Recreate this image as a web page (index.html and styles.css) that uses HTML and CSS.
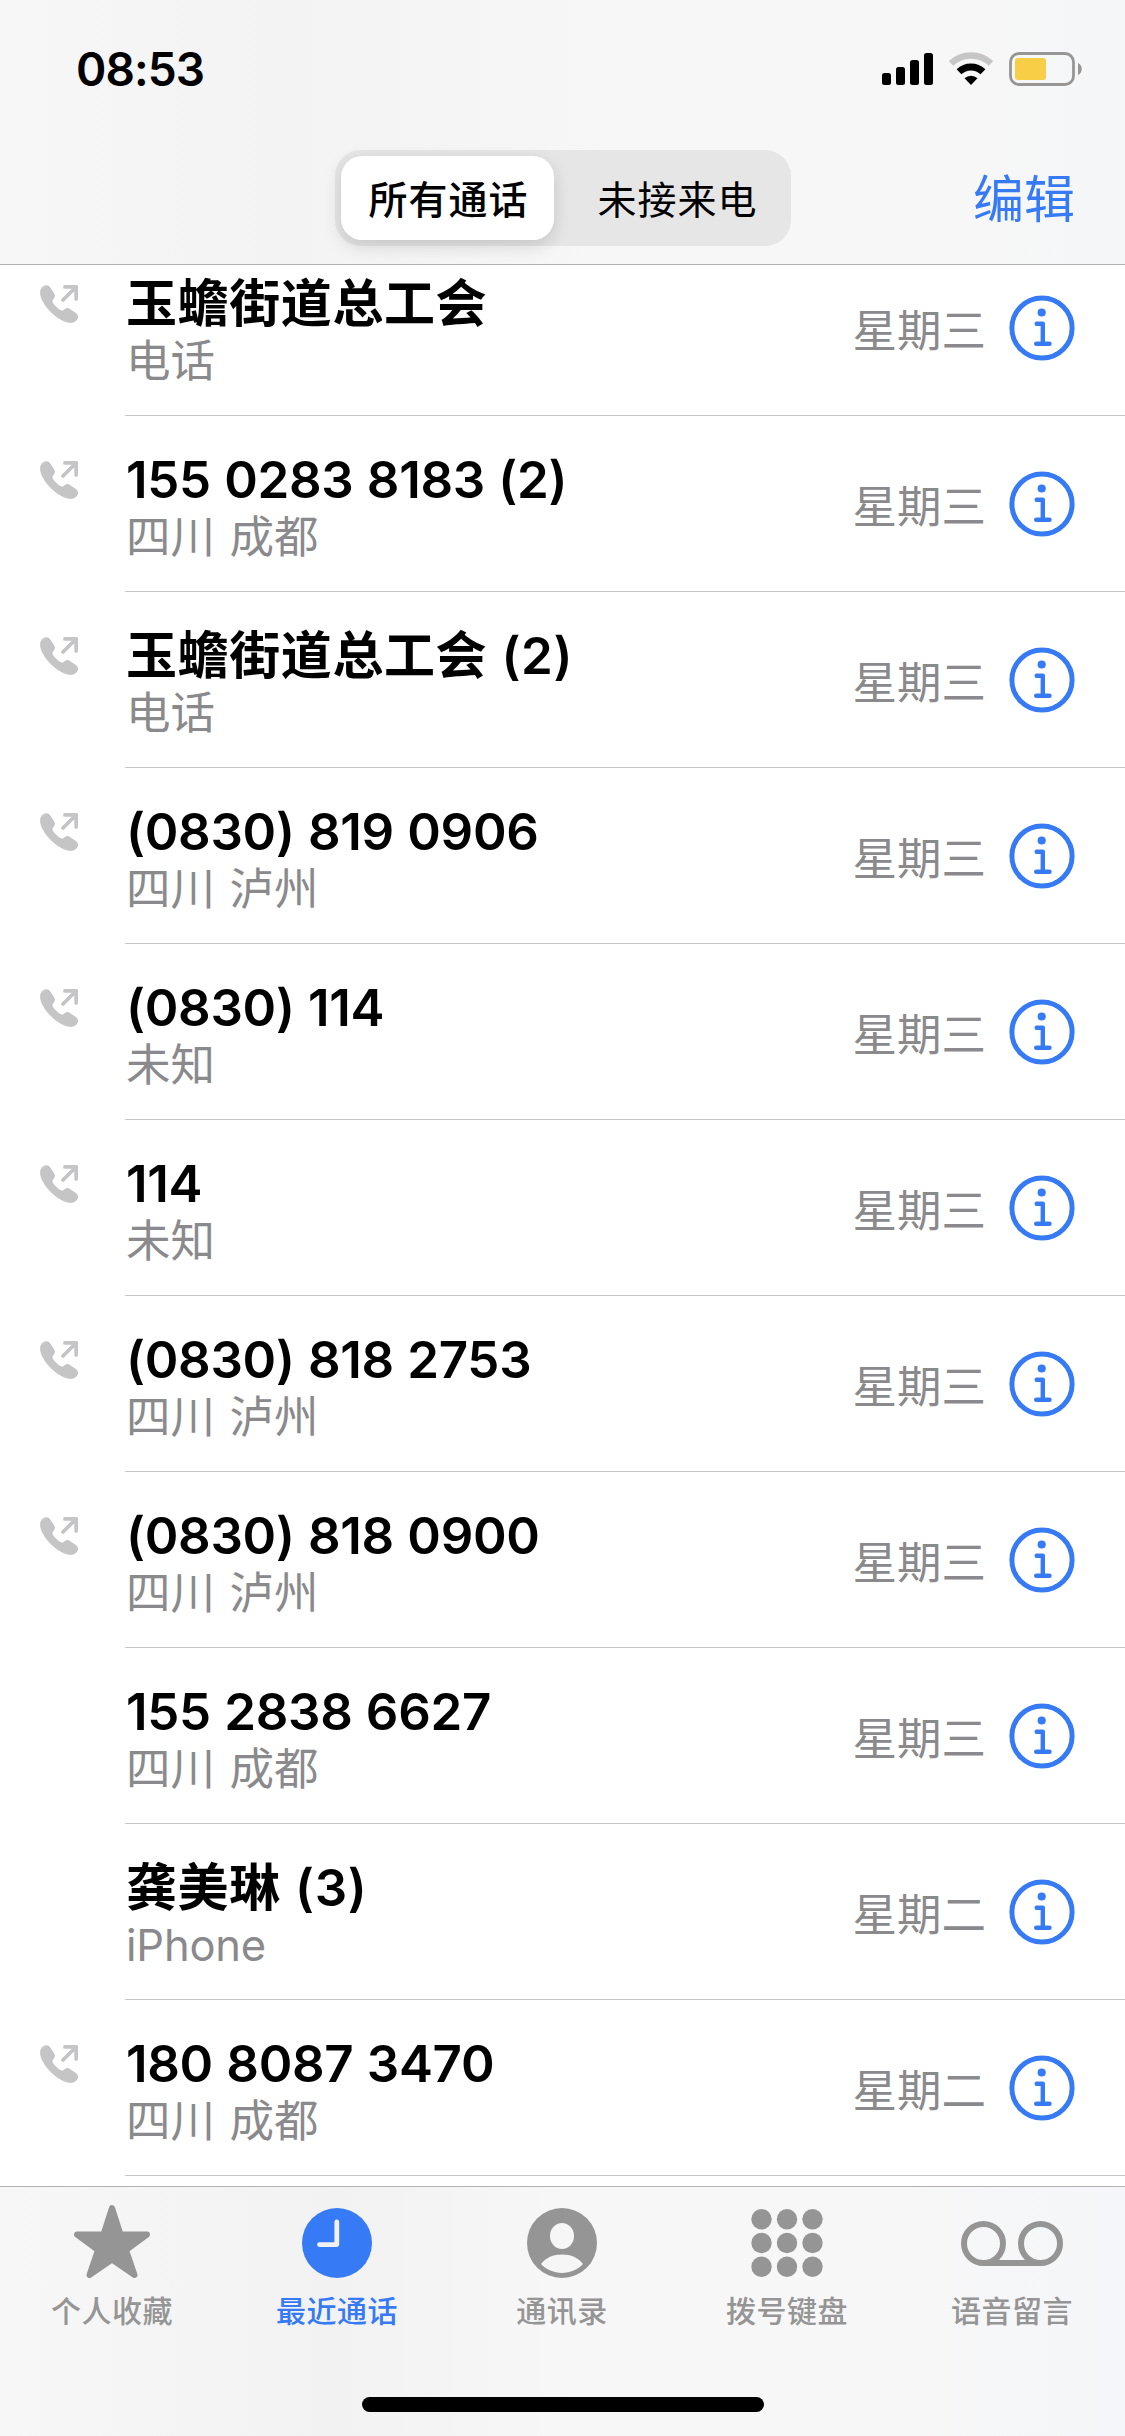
FILE: index.html
```html
<!DOCTYPE html>
<html lang="zh-CN">

<head>
	<meta charset="UTF-8">
	<title>最近通话</title>
	<link rel="stylesheet" href="styles.css">
</head>

<body>
	<!-- shared icons -->
	<svg class="sprite">
		<symbol id="outgoing" viewBox="0 0 38 38">
			<path d="M5.500 .3C7.500-.2 9.300.5 10.500 2.700L14.200 8.400C15.300 10.300 15 12 13.800 13.500L12.800 15C12.200 16 12.400 17.100 13.400 18.400C15.300 20.900 18.200 23.600 20.600 25.200C21.800 25.900 22.700 25.900 23.600 25L25.200 23.700C26.800 22.700 28.400 22.900 30 24L35.800 27.900C38.300 29.700 38.600 32 37.200 34.400C35.200 37.400 31.500 38.500 27.700 37.600C21.200 35.900 13 30.200 7.300 23.200C2.700 17.500 0 11.800 .1 7.200C.2 3.600 2.500 1.100 5.500 .3Z" fill="currentColor"/>
			<path d="M25 1.900H36.200V14M35.500 2.500L23 15" fill="none" stroke="currentColor" stroke-width="3.800" stroke-linecap="round" stroke-linejoin="round"/>
		</symbol>
		<symbol id="info" viewBox="0 0 66 66">
			<circle cx="33" cy="33" r="30.100" fill="none" stroke="currentColor" stroke-width="5"/>
			<circle cx="32.700" cy="17.500" r="4.100" fill="currentColor"/>
			<path d="M27.700 28.800H33.800V48.500M27.200 48.700H40.500" fill="none" stroke="currentColor" stroke-width="4.400" stroke-linecap="round" stroke-linejoin="round"/>
		</symbol>
	</svg>

	<header class="top">
		<div class="status">
			<span class="time">08:53</span>
			<svg class="status-icons" width="204" height="36" viewBox="0 0 204 36">
				<rect x="0" y="22" width="9" height="12" rx="2.500"/>
				<rect x="14" y="16" width="9" height="18" rx="2.500"/>
				<rect x="28" y="9" width="9" height="25" rx="2.500"/>
				<rect x="42" y="2" width="9" height="32" rx="2.500"/>
				<path d="M69 12.400A29 29 0 0 1 109 12.400" fill="none" stroke="#c6c6c6" stroke-width="6.500"/>
				<path d="M77 20.700A17.500 17.500 0 0 1 101 20.700" fill="none" stroke="#000" stroke-width="7"/>
				<path d="M82.500 27.200A9.500 9.500 0 0 1 95.500 27.200L89 34Z"/>
				<rect x="128.500" y="2.500" width="63" height="31" rx="8.500" fill="none" stroke="#969696" stroke-width="2.800"/>
				<rect x="133" y="7" width="31" height="22" rx="3" fill="#f7ce46"/>
				<path d="M196 12C201 14 201 22 196 24Z" fill="#969696"/>
			</svg>
		</div>
		<nav class="navbar">
			<div class="segmented">
				<div class="segment selected">所有通话</div>
				<div class="segment">未接来电</div>
			</div>
			<a class="edit">编辑</a>
		</nav>
	</header>

	<main class="calls">
		<div class="call">
			<svg class="call-icon"><use href="#outgoing"/></svg>
			<div class="call-body">
				<div class="who"><div class="name contact">玉蟾街道总工会</div><div class="place">电话</div></div>
				<span class="day">星期三</span>
				<svg class="info"><use href="#info"/></svg>
			</div>
		</div>
		<div class="call">
			<svg class="call-icon"><use href="#outgoing"/></svg>
			<div class="call-body">
				<div class="who"><div class="name">155 0283 8183 (2)</div><div class="place">四川 成都</div></div>
				<span class="day">星期三</span>
				<svg class="info"><use href="#info"/></svg>
			</div>
		</div>
		<div class="call">
			<svg class="call-icon"><use href="#outgoing"/></svg>
			<div class="call-body">
				<div class="who"><div class="name contact">玉蟾街道总工会 (2)</div><div class="place">电话</div></div>
				<span class="day">星期三</span>
				<svg class="info"><use href="#info"/></svg>
			</div>
		</div>
		<div class="call">
			<svg class="call-icon"><use href="#outgoing"/></svg>
			<div class="call-body">
				<div class="who"><div class="name">(0830) 819 0906</div><div class="place">四川 泸州</div></div>
				<span class="day">星期三</span>
				<svg class="info"><use href="#info"/></svg>
			</div>
		</div>
		<div class="call">
			<svg class="call-icon"><use href="#outgoing"/></svg>
			<div class="call-body">
				<div class="who"><div class="name">(0830) 114</div><div class="place">未知</div></div>
				<span class="day">星期三</span>
				<svg class="info"><use href="#info"/></svg>
			</div>
		</div>
		<div class="call">
			<svg class="call-icon"><use href="#outgoing"/></svg>
			<div class="call-body">
				<div class="who"><div class="name">114</div><div class="place">未知</div></div>
				<span class="day">星期三</span>
				<svg class="info"><use href="#info"/></svg>
			</div>
		</div>
		<div class="call">
			<svg class="call-icon"><use href="#outgoing"/></svg>
			<div class="call-body">
				<div class="who"><div class="name">(0830) 818 2753</div><div class="place">四川 泸州</div></div>
				<span class="day">星期三</span>
				<svg class="info"><use href="#info"/></svg>
			</div>
		</div>
		<div class="call">
			<svg class="call-icon"><use href="#outgoing"/></svg>
			<div class="call-body">
				<div class="who"><div class="name">(0830) 818 0900</div><div class="place">四川 泸州</div></div>
				<span class="day">星期三</span>
				<svg class="info"><use href="#info"/></svg>
			</div>
		</div>
		<!-- incoming calls have no icon -->
		<div class="call">
			<div class="call-body">
				<div class="who"><div class="name">155 2838 6627</div><div class="place">四川 成都</div></div>
				<span class="day">星期三</span>
				<svg class="info"><use href="#info"/></svg>
			</div>
		</div>
		<div class="call">
			<div class="call-body">
				<div class="who"><div class="name contact">龚美琳 (3)</div><div class="place latin">iPhone</div></div>
				<span class="day">星期二</span>
				<svg class="info"><use href="#info"/></svg>
			</div>
		</div>
		<div class="call">
			<svg class="call-icon"><use href="#outgoing"/></svg>
			<div class="call-body">
				<div class="who"><div class="name">180 8087 3470</div><div class="place">四川 成都</div></div>
				<span class="day">星期二</span>
				<svg class="info"><use href="#info"/></svg>
			</div>
		</div>
	</main>

	<footer class="bottom">
		<nav class="tabs">
			<a class="tab">
				<svg width="76" height="80" viewBox="0 0 76 80">
					<path d="M38 8L46.500 34.500H73L52 50L60.500 75L38 59.500L15.500 75L24 50L3 34.500H29.500Z" fill="currentColor" stroke="currentColor" stroke-width="6" stroke-linejoin="round"/>
				</svg>
				<span>个人收藏</span>
			</a>
			<a class="tab active">
				<svg width="76" height="80" viewBox="0 0 76 80">
					<circle cx="38" cy="43" r="35" fill="currentColor"/>
					<path d="M37.800 22V44.600H20.500" fill="none" stroke="#f2f2f2" stroke-width="4.800" stroke-linecap="round" stroke-linejoin="round"/>
				</svg>
				<span>最近通话</span>
			</a>
			<a class="tab">
				<svg width="76" height="80" viewBox="0 0 76 80">
					<circle cx="38" cy="43" r="35" fill="currentColor"/>
					<ellipse cx="38" cy="36" rx="12" ry="13" fill="#f6f6f6"/>
					<path d="M17 64C22 57.500 29 54.500 38 54.500S54 57.500 59 64C54 69.500 46 73 38 73S22 69.500 17 64Z" fill="#f6f6f6"/>
				</svg>
				<span>通讯录</span>
			</a>
			<a class="tab">
				<svg width="76" height="80" viewBox="0 0 76 80" fill="currentColor">
					<circle cx="12.500" cy="19.300" r="10.200"/><circle cx="38" cy="19.300" r="10.200"/><circle cx="63.500" cy="19.300" r="10.200"/>
					<circle cx="12.500" cy="43" r="10.200"/><circle cx="38" cy="43" r="10.200"/><circle cx="63.500" cy="43" r="10.200"/>
					<circle cx="12.500" cy="66.700" r="10.200"/><circle cx="38" cy="66.700" r="10.200"/><circle cx="63.500" cy="66.700" r="10.200"/>
				</svg>
				<span>拨号键盘</span>
			</a>
			<a class="tab">
				<svg width="104" height="80" viewBox="0 0 104 80" fill="none" stroke="currentColor" stroke-width="6">
					<circle cx="23.500" cy="43.500" r="19.500"/>
					<circle cx="80.500" cy="43.500" r="19.500"/>
					<path d="M23.500 63H80.500"/>
				</svg>
				<span>语音留言</span>
			</a>
		</nav>
		<div class="home"></div>
	</footer>
</body>

</html>
```
FILE: styles.css
```css
* {
	box-sizing: border-box;
}

body {
	margin: 0;
	width: 1125px;
	height: 2436px;
	display: flex;
	flex-direction: column;
	overflow: hidden;
	background: #fff;
	color: #000;
	font-family: Inter, "Noto Sans CJK SC", sans-serif;
}

.sprite {
	display: none;
}

/* status bar + nav bar */
.top {
	height: 265px;
	flex: none;
	border-bottom: 1px solid #b2b2b4;
	background: linear-gradient(90deg, #f7f7f7 0, #f3f3f3 25%, #f7f7f7 55%, #f7f7f7 85%, #f4f6f8 100%);
}

.status {
	height: 138px;
	padding: 0 39px 0 76px;
	display: flex;
	align-items: center;
	justify-content: space-between;
}

.time {
	font-size: 46px;
	font-weight: 600;
	letter-spacing: -.9px;
}

.navbar {
	height: 120px;
	padding-right: 50px;
	display: grid;
	grid-template-columns: 335px 456px 1fr;
	align-items: center;
}

.segmented {
	grid-column: 2;
	height: 96px;
	padding: 6px;
	display: flex;
	border-radius: 26px;
	background: #e6e6e6;
}

.segment {
	flex: 1;
	display: flex;
	align-items: center;
	justify-content: center;
	padding: 0 0 3px 16px;
	border-radius: 21px;
	font-size: 39px;
	letter-spacing: 1px;
}

.selected {
	flex: none;
	width: 213px;
	padding-left: 2px;
	background: #fff;
	font-weight: 500;
	box-shadow: 0 6px 18px rgba(0, 0, 0, .14);
}

.edit {
	justify-self: end;
	padding-bottom: 4px;
	font-size: 51px;
	color: #367af6;
}

/* call list, scrolled so the first row starts under the nav bar */
.calls {
	height: 1921px;
	flex: none;
	overflow: hidden;
	display: flex;
	flex-direction: column;
	justify-content: flex-end;
	padding-bottom: 10px;
}

.call {
	height: 176px;
	flex: none;
	display: flex;
	justify-content: flex-end;
}

.call-icon {
	width: 38px;
	height: 38px;
	margin: 45px 47px 0 40px;
	color: #c5c5c7;
}

.call-body {
	width: 1000px;
	padding: 0 50px 0 1px;
	display: flex;
	align-items: center;
	border-bottom: 1px solid #c6c6c8;
}

.who {
	flex: 1;
	padding-top: 7px;
}

.name {
	height: 59px;
	line-height: 60px;
	font-size: 51px;
	font-weight: 600;
	letter-spacing: -.3px;
	word-spacing: .8px;
}

.contact {
	letter-spacing: .6px;
}

.place {
	height: 56px;
	line-height: 56px;
	word-spacing: 2px;
}

.place,
.day {
	font-size: 44.5px;
	color: #8a8a8d;
}

.latin {
	font-size: 43.5px;
	letter-spacing: -.2px;
}

.info {
	width: 66px;
	height: 66px;
	margin: 1px 0 0 23px;
	color: #367af6;
}

/* tab bar */
.bottom {
	height: 250px;
	flex: none;
	border-top: 1px solid #b2b2b4;
	background: linear-gradient(90deg, #f7f7f7 0, #f2f2f2 30%, #f7f7f7 50%, #f7f7f7 80%, #f4f6f9 100%);
}

.tabs {
	height: 210px;
	display: grid;
	grid-template-columns: repeat(5, 1fr);
}

.tab {
	padding: 13px 1px 0 0;
	display: flex;
	flex-direction: column;
	align-items: center;
	color: #959595;
	font-size: 30px;
	line-height: 44px;
	font-weight: 500;
}

.tab span {
	margin-top: 9px;
	letter-spacing: .5px;
}

.active {
	color: #367af6;
}

.home {
	width: 402px;
	height: 15px;
	margin: 0 auto;
	border-radius: 8px;
	background: #000;
}
```
